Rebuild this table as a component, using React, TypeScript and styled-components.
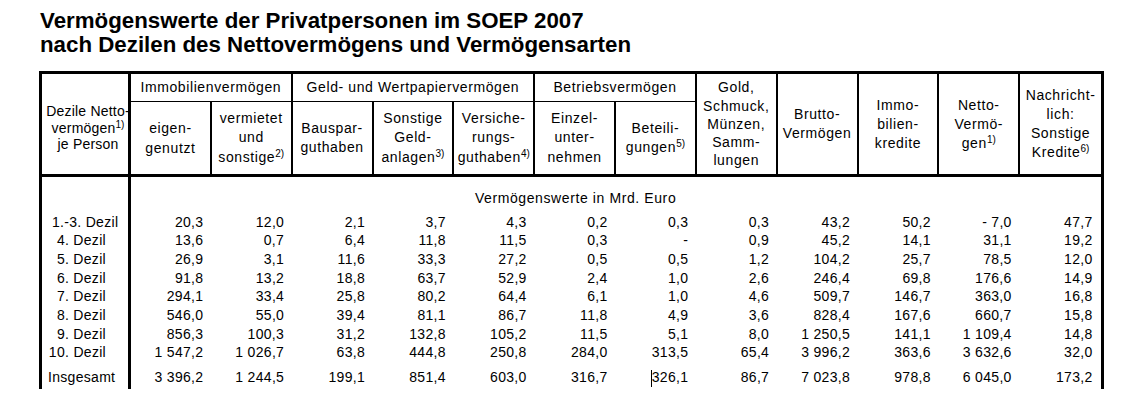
import styled, { createGlobalStyle } from "styled-components";

const GlobalStyle = createGlobalStyle`
  body {
    margin: 0;
    background: #fff;
    color: #000;
    font-family: "Liberation Sans", Arial, sans-serif;
  }
`;

const Page = styled.div`
  padding: 9px 0 0 39px;
`;

const Title = styled.h1`
  margin: 0 0 14px 1px;
  font-size: 22.3px;
  line-height: 24px;
  font-weight: 700;
`;

const Table = styled.div`
  width: 1065px;
  box-sizing: border-box;
  border: 3px solid #000;
  border-bottom: none;
`;

const Head = styled.div`
  display: grid;
  grid-template-columns: 89px repeat(12, 1fr);
  grid-template-rows: 28px 72px;
  border-bottom: 3px solid #000;
`;

const HeadCell = styled.div<{
  $col: string;
  $row: string;
  $lh?: number;
  $top?: number;
  $left?: number;
  $ls?: number;
  $last?: boolean;
  $group?: boolean;
  $first?: boolean;
}>`
  grid-column: ${(p) => p.$col};
  grid-row: ${(p) => p.$row};
  display: flex;
  align-items: center;
  justify-content: center;
  text-align: center;
  font-size: 14px;
  letter-spacing: ${(p) => p.$ls ?? 0.6}px;
  line-height: ${(p) => p.$lh ?? 19}px;
  padding-top: ${(p) => p.$top ?? 0}px;
  padding-left: ${(p) => p.$left ?? 0}px;
  white-space: nowrap;
  border-right: ${(p) => (p.$last ? "none" : p.$first ? "3px solid #000" : "2px solid #000")};
  border-bottom: ${(p) => (p.$group ? "1px solid #000" : "none")};
`;

const Sup = styled.sup`
  font-size: 10px;
  line-height: 0;
  letter-spacing: 0;
  vertical-align: 5px;
`;

const Body = styled.div`
  display: grid;
  grid-template-columns: 89px repeat(12, 1fr);
  grid-template-rows: 35.6px repeat(8, 18.7px) 26.8px;
`;

const Label = styled.div<{ $top?: number; $align: "left" | "right"; $pad: number }>`
  grid-column: 1;
  border-right: 3px solid #000;
  font-size: 14px;
  letter-spacing: 0.3px;
  line-height: 18.7px;
  white-space: nowrap;
  padding-top: ${(p) => p.$top ?? 0}px;
  text-align: ${(p) => p.$align};
  ${(p) => (p.$align === "left" ? `padding-left: ${p.$pad}px;` : `padding-right: ${p.$pad}px;`)}
`;

const Num = styled.div<{ $top?: number }>`
  font-size: 14px;
  letter-spacing: 0.3px;
  line-height: 18.7px;
  text-align: right;
  white-space: nowrap;
  padding-right: 8.5px;
  padding-top: ${(p) => p.$top ?? 0}px;
`;

const Caption = styled.div`
  grid-column: 2 / 13;
  text-align: center;
  font-size: 14px;
  letter-spacing: 0.6px;
  line-height: 19px;
  padding-top: 11.5px;
`;

const Caret = styled.span`
  display: inline-block;
  width: 1px;
  height: 17px;
  background: #000;
  vertical-align: -5px;
`;

type Row = { label: string; align: "left" | "right"; pad: number; values: string[] };

const rows: Row[] = [
  { label: "1.-3. Dezil", align: "left", pad: 10, values: ["20,3", "12,0", "2,1", "3,7", "4,3", "0,2", "0,3", "0,3", "43,2", "50,2", "- 7,0", "47,7"] },
  { label: "4. Dezil", align: "right", pad: 22, values: ["13,6", "0,7", "6,4", "11,8", "11,5", "0,3", "-", "0,9", "45,2", "14,1", "31,1", "19,2"] },
  { label: "5. Dezil", align: "right", pad: 22, values: ["26,9", "3,1", "11,6", "33,3", "27,2", "0,5", "0,5", "1,2", "104,2", "25,7", "78,5", "12,0"] },
  { label: "6. Dezil", align: "right", pad: 22, values: ["91,8", "13,2", "18,8", "63,7", "52,9", "2,4", "1,0", "2,6", "246,4", "69,8", "176,6", "14,9"] },
  { label: "7. Dezil", align: "right", pad: 22, values: ["294,1", "33,4", "25,8", "80,2", "64,4", "6,1", "1,0", "4,6", "509,7", "146,7", "363,0", "16,8"] },
  { label: "8. Dezil", align: "right", pad: 22, values: ["546,0", "55,0", "39,4", "81,1", "86,7", "11,8", "4,9", "3,6", "828,4", "167,6", "660,7", "15,8"] },
  { label: "9. Dezil", align: "right", pad: 22, values: ["856,3", "100,3", "31,2", "132,8", "105,2", "11,5", "5,1", "8,0", "1 250,5", "141,1", "1 109,4", "14,8"] },
  { label: "10. Dezil", align: "right", pad: 22, values: ["1 547,2", "1 026,7", "63,8", "444,8", "250,8", "284,0", "313,5", "65,4", "3 996,2", "363,6", "3 632,6", "32,0"] },
  { label: "Insgesamt", align: "left", pad: 6, values: ["3 396,2", "1 244,5", "199,1", "851,4", "603,0", "316,7", "326,1", "86,7", "7 023,8", "978,8", "6 045,0", "173,2"] },
];

const nb = (s: string) => s.replace(/ /g, "\u00a0");

export default function App() {
  return (
    <Page>
      <GlobalStyle />
      <Title>
        Vermögenswerte der Privatpersonen im SOEP 2007
        <br />
        nach Dezilen des Nettovermögens und Vermögensarten
      </Title>
      <Table>
        <Head>
          <HeadCell $col="1" $row="1 / 3" $lh={16.5} $top={8} $left={6} $ls={0.2} $first>
            <div>
              Dezile Netto-
              <br />
              vermögen<Sup>1)</Sup>
              <br />
              je Person
            </div>
          </HeadCell>
          <HeadCell $col="2 / 4" $row="1" $group>Immobilienvermögen</HeadCell>
          <HeadCell $col="4 / 7" $row="1" $group>Geld- und Wertpapiervermögen</HeadCell>
          <HeadCell $col="7 / 9" $row="1" $group>Betriebsvermögen</HeadCell>
          <HeadCell $col="9" $row="1 / 3" $lh={18.3}>
            <div>
              Gold,
              <br />
              Schmuck,
              <br />
              Münzen,
              <br />
              Samm-
              <br />
              lungen
            </div>
          </HeadCell>
          <HeadCell $col="10" $row="1 / 3">
            <div>
              Brutto-
              <br />
              Vermögen
            </div>
          </HeadCell>
          <HeadCell $col="11" $row="1 / 3">
            <div>
              Immo-
              <br />
              bilien-
              <br />
              kredite
            </div>
          </HeadCell>
          <HeadCell $col="12" $row="1 / 3">
            <div>
              Netto-
              <br />
              Vermö-
              <br />
              gen<Sup>1)</Sup>
            </div>
          </HeadCell>
          <HeadCell $col="13" $row="1 / 3" $last>
            <div>
              Nachricht-
              <br />
              lich:
              <br />
              Sonstige
              <br />
              Kredite<Sup>6)</Sup>
            </div>
          </HeadCell>

          <HeadCell $col="2" $row="2" $lh={20}>
            <div>
              eigen-
              <br />
              genutzt
            </div>
          </HeadCell>
          <HeadCell $col="3" $row="2" $lh={19.5}>
            <div>
              vermietet
              <br />
              und
              <br />
              sonstige<Sup>2)</Sup>
            </div>
          </HeadCell>
          <HeadCell $col="4" $row="2" $lh={19.5}>
            <div>
              Bauspar-
              <br />
              guthaben
            </div>
          </HeadCell>
          <HeadCell $col="5" $row="2" $lh={19.5}>
            <div>
              Sonstige
              <br />
              Geld-
              <br />
              anlagen<Sup>3)</Sup>
            </div>
          </HeadCell>
          <HeadCell $col="6" $row="2" $lh={19.5}>
            <div>
              Versiche-
              <br />
              rungs-
              <br />
              guthaben<Sup>4)</Sup>
            </div>
          </HeadCell>
          <HeadCell $col="7" $row="2" $lh={19.5}>
            <div>
              Einzel-
              <br />
              unter-
              <br />
              nehmen
            </div>
          </HeadCell>
          <HeadCell $col="8" $row="2" $lh={19.5}>
            <div>
              Beteili-
              <br />
              gungen<Sup>5)</Sup>
            </div>
          </HeadCell>
        </Head>

        <Body>
          <Label $align="left" $pad={0} />
          <Caption>Vermögenswerte in Mrd. Euro</Caption>
          <div />
          {rows.map((r, i) => {
            const top = i === rows.length - 1 ? 5.5 : 0;
            return [
              <Label key={r.label} $align={r.align} $pad={r.pad} $top={top}>
                {r.label}
              </Label>,
              ...r.values.map((v, j) => (
                <Num key={r.label + j} $top={top}>
                  {i === rows.length - 1 && j === 6 ? <Caret /> : null}
                  {nb(v)}
                </Num>
              )),
            ];
          })}
        </Body>
      </Table>
    </Page>
  );
}
